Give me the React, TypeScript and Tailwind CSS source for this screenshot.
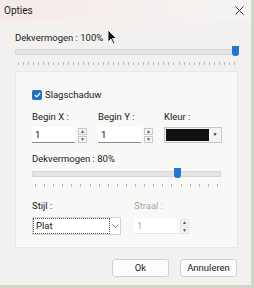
import React from "react";

function Ticks({ count }: { count: number }) {
  return (
    <div className="flex justify-between px-[3px] mt-[6px]">
      {Array.from({ length: count }).map((_, i) => (
        <div key={i} className="w-px h-[3px] bg-[#b8b8b8]" />
      ))}
    </div>
  );
}

function Slider({ pos, ticks }: { pos: number; ticks: number }) {
  return (
    <div>
      <div className="relative h-[8px]">
        <div className="absolute left-0 right-0 top-[1px] h-[6px] bg-[#e4e4e4] border border-[#d8d8d8]" />
        <div
          className="absolute top-[-2px] w-[7px] h-[10px] bg-[#1e78d4] rounded-b-[3px]"
          style={{ left: `calc(${pos}% - 4px)` }}
        />
      </div>
      <Ticks count={ticks} />
    </div>
  );
}

function Spin({ value, disabled }: { value: string; disabled?: boolean }) {
  const box = disabled ? "border-[#e4e4e4]" : "border-[#c8c8c8]";
  return (
    <div className="flex items-center gap-[3px]">
      <div
        className={`w-[43px] h-[16px] bg-white border-b ${
          disabled ? "border-[#e4e4e4] text-[#a8a8a8]" : "border-[#8a8a8a] text-black"
        } px-[3px] leading-[16px]`}
      >
        {value}
      </div>
      <div className="flex flex-col gap-px">
        <div className={`w-[9px] h-[7px] border ${box} bg-[#f6f6f6] flex items-center justify-center text-[5px] leading-none text-[#555]`}>▲</div>
        <div className={`w-[9px] h-[7px] border ${box} bg-[#f6f6f6] flex items-center justify-center text-[5px] leading-none text-[#555]`}>▼</div>
      </div>
    </div>
  );
}

export default function App() {
  return (
    <div
      className="relative w-[254px] h-[288px] overflow-hidden bg-[#f3f1ef] text-[9.5px] text-[#1a1a1a]"
      style={{ fontFamily: 'Roboto, "Noto Sans", sans-serif' }}
    >
      <div className="absolute inset-0 border-r-[3px] border-b-[3px] border-[#cfd8c8] pointer-events-none" />
      <div className="h-[20px] flex items-center justify-between pl-[4px] pr-[10px] bg-gradient-to-r from-[#f6eaea] to-[#f4f4f2]">
        <span className="text-[10px]">Opties</span>
        <svg width="9" height="9" viewBox="0 0 9 9" className="mt-[1px]">
          <path d="M0.5 0.5L8.5 8.5M8.5 0.5L0.5 8.5" stroke="#333" strokeWidth="1" />
        </svg>
      </div>

      <div className="px-[15px] pt-[11px] pr-[16px]">
        <div className="leading-[14px]">Dekvermogen : 100%</div>
        <div className="mt-[3px]">
          <Slider pos={99} ticks={44} />
        </div>

        <div className="mt-[6px] h-[177px] bg-[#f8f8f7] border border-[#e8e8e6] px-[16px] pt-[16px]">
          <div className="flex items-center gap-[3px]">
            <div className="w-[10px] h-[10px] rounded-[2px] bg-[#1e6fc8] flex items-center justify-center">
              <svg width="7" height="6" viewBox="0 0 7 6">
                <path d="M0.8 3L2.7 4.8L6.2 1" stroke="white" strokeWidth="1.2" fill="none" />
              </svg>
            </div>
            <span className="leading-[14px]">Slagschaduw</span>
          </div>

          <div className="flex mt-[8px] gap-[11px]">
            <div>
              <div className="leading-[14px]">Begin X :</div>
              <div className="mt-[3px]"><Spin value="1" /></div>
            </div>
            <div>
              <div className="leading-[14px]">Begin Y :</div>
              <div className="mt-[3px]"><Spin value="1" /></div>
            </div>
            <div>
              <div className="leading-[14px]">Kleur :</div>
              <div className="mt-[3px] flex items-center h-[16px] w-[58px] border border-[#c8c8c8] bg-[#f4f4f4]">
                <div className="ml-[1px] w-[43px] h-[12px] bg-[#111]" />
                <div className="flex-1 flex justify-center text-[5px] text-[#333]">▼</div>
              </div>
            </div>
          </div>

          <div className="mt-[9px] leading-[14px]">Dekvermogen : 80%</div>
          <div className="mt-[4px]">
            <Slider pos={77} ticks={21} />
          </div>

          <div className="flex mt-[12px] gap-[13px]">
            <div>
              <div className="leading-[14px]">Stijl :</div>
              <div className="mt-[4px] flex items-center w-[89px] h-[18px] bg-white border border-[#d4d4d4]">
                <div className="w-[77px] h-[16px] border border-[#555] border-dotted px-[2px] leading-[14px]">Plat</div>
                <svg width="7" height="4" viewBox="0 0 7 4" className="ml-[2px]">
                  <path d="M0.5 0.5L3.5 3.5L6.5 0.5" stroke="#777" fill="none" />
                </svg>
              </div>
            </div>
            <div>
              <div className="leading-[14px] text-[#a8a8a8]">Straal :</div>
              <div className="mt-[5px]"><Spin value="1" disabled /></div>
            </div>
          </div>
        </div>

        <div className="flex justify-end gap-[11px] mt-[11px] pr-[1px]">
          <button className="w-[57px] h-[18px] bg-[#fdfdfd] border border-[#d2d2d2] rounded-[3px] text-[9.5px] leading-none">Ok</button>
          <button className="w-[57px] h-[18px] bg-[#fdfdfd] border border-[#d2d2d2] rounded-[3px] text-[9.5px] leading-none">Annuleren</button>
        </div>
      </div>

      <svg width="10" height="16" viewBox="0 0 10 16" className="absolute left-[107px] top-[29px]">
        <path d="M1 1L1 13L4 10L6.5 15L8 14.3L5.6 9.5L9.5 9.5Z" fill="#111" stroke="#fff" strokeWidth="0.8" />
      </svg>
    </div>
  );
}
